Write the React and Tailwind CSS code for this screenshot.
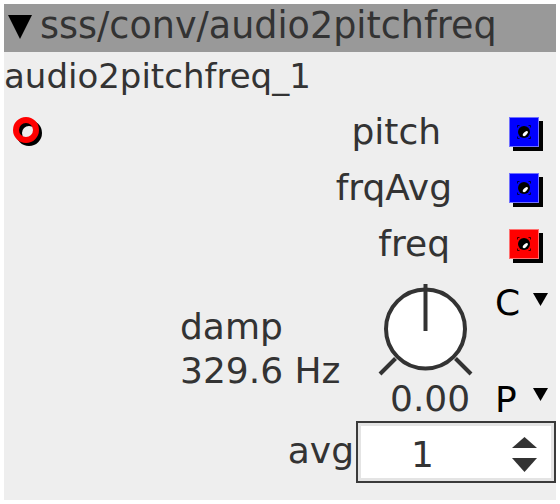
import React from 'react';

const font = { fontFamily: '"DejaVu Sans", "Liberation Sans", sans-serif' };

function Inlet() {
  return (
    <svg width="30" height="30" viewBox="0 0 30 30" className="shrink-0">
      <circle cx="16" cy="16" r="10" fill="none" stroke="#000" strokeWidth="6" />
      <circle cx="13" cy="13" r="10" fill="none" stroke="#ff0000" strokeWidth="6" />
    </svg>
  );
}

function Outlet({ color, edge }) {
  const marks = [
    'M8.5 10.5v-2h2',
    'M19.5 8.5h2v2',
    'M8.5 19.5v2h2',
    'M19.5 21.5h2v-2',
  ];
  return (
    <svg width="34" height="34" viewBox="0 0 34 34" className="shrink-0">
      <rect x="4" y="4" width="30" height="30" fill="#000" />
      <rect x="0.5" y="0.5" width="29" height="29" fill={color} stroke={edge} />
      {marks.map(d => (
        <path key={d} d={d} fill="none" stroke="#000" strokeOpacity="0.75" strokeWidth="1" />
      ))}
      <circle cx="15" cy="15" r="6" fill="#000" />
      <ellipse cx="16.3" cy="16.6" rx="3.2" ry="1.6" fill="#fff" transform="rotate(-45 16.3 16.6)" />
    </svg>
  );
}

function Tri({ w = 15, h = 13, className = '' }) {
  return (
    <svg width={w} height={h} viewBox={`0 0 ${w} ${h}`} className={`shrink-0 ${className}`}>
      <polygon points={`0,0 ${w},0 ${w / 2},${h}`} fill="#000" />
    </svg>
  );
}

function Knob() {
  return (
    <svg width="100" height="100" viewBox="0 0 100 100" className="block">
      <circle cx="49.5" cy="49" r="39.5" fill="#fff" stroke="#333" strokeWidth="4" />
      <line x1="49.5" y1="4" x2="49.5" y2="51" stroke="#333" strokeWidth="4" />
      <line x1="4" y1="94" x2="19.5" y2="78.5" stroke="#333" strokeWidth="4" />
      <line x1="79.5" y1="78.5" x2="95" y2="94" stroke="#333" strokeWidth="4" />
    </svg>
  );
}

function OutRow({ label, mr, color, edge }) {
  return (
    <div className="flex h-[56px] items-start justify-end">
      <span className="leading-[56px]" style={{ marginRight: mr }}>{label}</span>
      <div className="mt-[13px] mr-[13px]">
        <Outlet color={color} edge={edge} />
      </div>
    </div>
  );
}

export default function App() {
  return (
    <div className="min-h-screen bg-white p-1" style={font}>
      <div className="flex h-[496px] w-[552px] flex-col bg-[#eeeeee] text-[36px] text-[#333333]">
        {/* header */}
        <div className="flex h-12 items-start bg-[#999999]">
          <Tri w={24} h={24} className="ml-1 mt-[11px]" />
          <span className="ml-2 text-[36.5px] leading-[43px]">sss/conv/audio2pitchfreq</span>
        </div>

        <div className="h-12 text-[34px] leading-[48px]">audio2pitchfreq_1</div>

        {/* ports */}
        <div className="mt-1 flex flex-col">
          <div className="flex h-[56px] items-start">
            <div className="ml-[9px] mt-[13px]">
              <Inlet />
            </div>
            <div className="flex flex-1 items-start justify-end">
              <span className="leading-[56px]" style={{ marginRight: 68 }}>pitch</span>
              <div className="mt-[13px] mr-[13px]">
                <Outlet color="#0000ff" edge="#7070ff" />
              </div>
            </div>
          </div>
          <OutRow label="frqAvg" mr={57} color="#0000ff" edge="#7070ff" />
          <OutRow label="freq" mr={59} color="#ff0000" edge="#ff7070" />
        </div>

        {/* knob section */}
        <div className="flex h-[149px] items-start">
          <div className="ml-[176px] mt-[33px] flex w-[196px] flex-col leading-[44px]">
            <span>damp</span>
            <span>329.6 Hz</span>
          </div>
          <div className="mt-2 flex w-[119px] flex-col">
            <Knob />
            <span className="pl-[14px] leading-[38px]">0.00</span>
          </div>
          <div className="mt-[9px] flex flex-col text-black">
            <div className="flex h-[44px] items-start">
              <span className="w-[38px] leading-[44px]">C</span>
              <Tri className="mt-3" />
            </div>
            <div className="mt-[53px] flex h-[44px] items-start">
              <span className="w-[38px] leading-[44px]">P</span>
              <Tri className="mt-[10px]" />
            </div>
          </div>
        </div>

        {/* avg spinner */}
        <div className="flex h-[62px] items-start justify-end">
          <span className="mr-[2px] leading-[60px]">avg</span>
          <div className="h-[62px] w-[200px] border-2 border-[#3a3a3a] bg-white">
            <div className="flex h-full items-start border-[3px] border-[#e4e4e4]">
              <span className="ml-[50px] mt-[9px] leading-[40px]">1</span>
              <svg width="25" height="35" viewBox="0 0 25 35" className="ml-auto mr-[14px] mt-[11px]">
                <polygon points="12.5,0 25,11 0,11" fill="#333" />
                <polygon points="0,21 25,21 12.5,35" fill="#333" />
              </svg>
            </div>
          </div>
        </div>
      </div>
    </div>
  );
}
